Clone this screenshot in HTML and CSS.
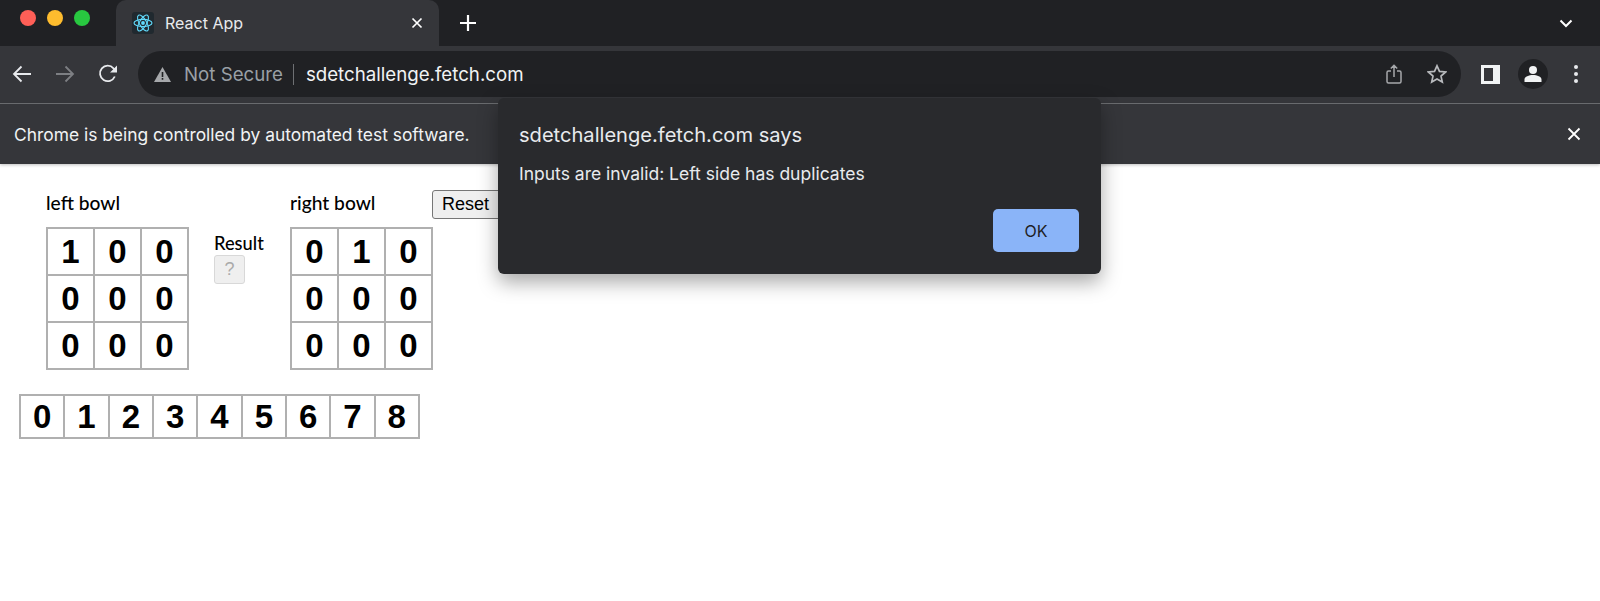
FILE: index.html
```html
<!DOCTYPE html>
<html lang="en">
<head>
  <meta charset="UTF-8">
  <meta name="viewport" content="width=device-width, initial-scale=1.0">
  <title>React App</title>
  <link rel="stylesheet" href="styles.css">
</head>
<body>
  <div class="tabstrip">
    <div class="traffic">
      <span class="light red"></span>
      <span class="light yellow"></span>
      <span class="light green"></span>
    </div>
    <div class="tab">
      <svg class="favicon" width="22" height="22" viewBox="0 0 22 22">
        <rect width="22" height="22" rx="3" fill="#20292f"/>
        <g fill="none" stroke="#61dafb" stroke-width="1.1">
          <ellipse cx="11" cy="11" rx="9" ry="3.6"/>
          <ellipse cx="11" cy="11" rx="9" ry="3.6" transform="rotate(60 11 11)"/>
          <ellipse cx="11" cy="11" rx="9" ry="3.6" transform="rotate(120 11 11)"/>
        </g>
        <circle cx="11" cy="11" r="1.9" fill="#61dafb"/>
      </svg>
      <span class="tab-title">React App</span>
      <svg class="tab-close" width="12" height="12" viewBox="0 0 12 12">
        <path d="M1.5 1.5l9 9M10.5 1.5l-9 9" stroke="#fff" stroke-width="1.7" fill="none"/>
      </svg>
    </div>
    <svg class="new-tab" width="18" height="18" viewBox="0 0 18 18">
      <path d="M9 1v16M1 9h16" stroke="#fff" stroke-width="2.2" fill="none"/>
    </svg>
    <svg class="tab-search" width="14" height="9" viewBox="0 0 14 9">
      <path d="M1.5 1.5L7 7l5.500-5.500" stroke="#fff" stroke-width="2" fill="none"/>
    </svg>
  </div>

  <div class="toolbar">
    <div class="nav">
      <svg width="20" height="18" viewBox="0 0 20 18">
        <path d="M19 9H2M9.500 1.500L2 9l7.500 7.500" stroke="#e8eaed" stroke-width="1.8" fill="none"/>
      </svg>
      <svg width="20" height="18" viewBox="0 0 20 18">
        <path d="M1 9h17M10.500 1.500L18 9l-7.500 7.500" stroke="#7d7f83" stroke-width="1.8" fill="none"/>
      </svg>
      <svg width="20" height="20" viewBox="0 0 20 20">
        <path d="M16.800 12.500A7.700 7.700 0 1 1 15.500 4.300L18 6.800" stroke="#e8eaed" stroke-width="1.8" fill="none"/>
        <path d="M19 1.500V8.500H12z" fill="#e8eaed"/>
      </svg>
    </div>
    <div class="omnibox">
      <svg class="warn" width="17" height="15" viewBox="0 0 17 15">
        <path d="M8.500 0L17 15H0z" fill="#a6a8ab"/>
        <path d="M7.700 5h1.600v5H7.700zM7.700 11h1.600v1.700H7.700z" fill="#202124"/>
      </svg>
      <span class="not-secure">Not Secure</span>
      <span class="divider"></span>
      <span class="url">sdetchallenge.fetch.com</span>
      <svg class="share" width="16" height="21" viewBox="0 0 16 21">
        <path d="M5 7H2.500A1.500 1.500 0 0 0 1 8.500v9A1.500 1.500 0 0 0 2.500 19h11a1.500 1.500 0 0 0 1.500-1.500v-9A1.500 1.500 0 0 0 13.500 7H11M8 13V1.500M4.800 4.500L8 1.300l3.200 3.200" stroke="#a6a8ab" stroke-width="1.500" fill="none"/>
      </svg>
      <svg class="star" width="20" height="20" viewBox="0 0 20 20">
        <path d="M10 1.800l2.500 5.600 6.100.6-4.600 4.100 1.300 6-5.300-3.100-5.300 3.100 1.300-6L1.400 8l6.100-.6z" stroke="#b8babd" stroke-width="1.700" fill="none"/>
      </svg>
    </div>
    <div class="actions">
      <svg width="19" height="19" viewBox="0 0 19 19">
        <path fill-rule="evenodd" d="M0 0h19v19H0zM3 3v13h9V3z" fill="#f1f3f4"/>
      </svg>
      <div class="avatar">
        <svg width="18" height="18" viewBox="0 0 18 18">
          <circle cx="9" cy="5" r="4" fill="#f1f3f4"/>
          <path d="M0.500 17v-2.500C0.500 11.500 5 10 9 10s8.500 1.500 8.500 4.500V17z" fill="#f1f3f4"/>
        </svg>
      </div>
      <div class="menu"><span></span><span></span><span></span></div>
    </div>
  </div>

  <div class="infobar">
    <span>Chrome is being controlled by automated test software.</span>
    <svg width="14" height="14" viewBox="0 0 14 14">
      <path d="M1.500 1.500l11 11M12.500 1.500l-11 11" stroke="#fff" stroke-width="1.800" fill="none"/>
    </svg>
  </div>

  <main class="page">
    <div class="game">
      <div class="bowl">
        <div class="bowl-label">left bowl</div>
        <div class="board">
          <div class="cell">1</div><div class="cell">0</div><div class="cell">0</div>
          <div class="cell">0</div><div class="cell">0</div><div class="cell">0</div>
          <div class="cell">0</div><div class="cell">0</div><div class="cell">0</div>
        </div>
      </div>
      <div class="result">
        <div class="result-label">Result</div>
        <button class="result-btn" disabled>?</button>
      </div>
      <div class="bowl">
        <div class="bowl-label">right bowl</div>
        <div class="board">
          <div class="cell">0</div><div class="cell">1</div><div class="cell">0</div>
          <div class="cell">0</div><div class="cell">0</div><div class="cell">0</div>
          <div class="cell">0</div><div class="cell">0</div><div class="cell">0</div>
        </div>
      </div>
      <button class="reset">Reset</button>
    </div>
    <div class="coins">
      <div class="coin">0</div><div class="coin">1</div><div class="coin">2</div>
      <div class="coin">3</div><div class="coin">4</div><div class="coin">5</div>
      <div class="coin">6</div><div class="coin">7</div><div class="coin">8</div>
    </div>
  </main>

  <div class="dialog">
    <div class="dialog-title">sdetchallenge.fetch.com says</div>
    <div class="dialog-msg">Inputs are invalid: Left side has duplicates</div>
    <div class="dialog-actions">
      <button class="ok">OK</button>
    </div>
  </div>
</body>
</html>
```

FILE: styles.css
```css
* {
  box-sizing: border-box;
}
html, body {
  height: 100%;
}
body {
  margin: 0;
  font-family: Inter, Roboto, sans-serif;
  background-color: #fff;
  overflow: hidden;
  position: relative;
}

/* browser chrome */
.tabstrip {
  height: 46px;
  background-color: #202124;
  display: flex;
  align-items: center;
}
.traffic {
  display: flex;
  gap: 11px;
  padding: 0 22px 10px 20px;
}
.light {
  width: 16px;
  height: 16px;
  border-radius: 50%;
}
.red { background-color: #ff5f57; }
.yellow { background-color: #febc2e; }
.green { background-color: #28c840; }
.tab {
  width: 323px;
  height: 46px;
  margin-left: 4px;
  padding: 0 16px;
  background-color: #35363a;
  border-radius: 10px 10px 0 0;
  display: flex;
  align-items: center;
  color: #e8eaed;
  font-size: 16px;
}
.favicon {
  flex: none;
}
.tab-title {
  margin-left: 11px;
  flex: 1;
}
.new-tab {
  margin-left: 20px;
}
.tab-search {
  margin-left: auto;
  margin-right: 27px;
}
.toolbar {
  height: 58px;
  background-color: #35363a;
  border-bottom: 1px solid #6e7073;
  display: flex;
  align-items: center;
  padding-bottom: 1px;
}
.nav {
  width: 138px;
  flex: none;
  padding: 0 20px 0 12px;
  display: flex;
  align-items: center;
  justify-content: space-between;
}
.omnibox {
  width: 1323px;
  height: 46px;
  background-color: #202124;
  border-radius: 23px;
  display: flex;
  align-items: center;
  padding: 0 14px 0 16px;
  font-size: 18.700px;
}
.not-secure {
  margin-left: 13px;
  color: #9aa0a6;
}
.divider {
  width: 1px;
  height: 21px;
  background-color: #6e7073;
  margin: 0 12px 0 10px;
}
.url {
  color: #f1f3f4;
  flex: 1;
}
.star {
  margin-left: 25px;
}
.actions {
  flex: 1;
  display: flex;
  align-items: center;
  padding-left: 20px;
}
.avatar {
  width: 30px;
  height: 30px;
  border-radius: 50%;
  background-color: #202124;
  margin-left: 18px;
  display: flex;
  align-items: center;
  justify-content: center;
}
.menu {
  margin-left: 26px;
  display: flex;
  flex-direction: column;
  gap: 3px;
}
.menu span {
  width: 4px;
  height: 4px;
  border-radius: 50%;
  background-color: #e8eaed;
}
.infobar {
  height: 60px;
  background-color: #35363a;
  display: flex;
  align-items: center;
  justify-content: space-between;
  padding: 0 19px 0 14px;
  color: #f1f3f4;
  font-size: 17.400px;
  box-shadow: 0 1px 3px rgba(0, 0, 0, 0.25);
  position: relative;
}

/* page content */
.page {
  padding: 25px 0 0 19px;
  color: #000;
}
.game {
  display: flex;
  align-items: flex-start;
  padding-left: 27px;
}
.bowl-label {
  font-family: Lato, sans-serif;
  font-size: 19.200px;
  font-weight: 500;
  line-height: 24px;
  padding-top: 2px;
  margin-bottom: 12px;
}
.board {
  width: 143px;
  display: grid;
  grid-template-columns: repeat(3, 1fr);
  border-top: 2px solid #b0b0b0;
  border-left: 2px solid #b0b0b0;
}
.cell {
  height: 47px;
  border-right: 2px solid #b0b0b0;
  border-bottom: 2px solid #b0b0b0;
  display: flex;
  align-items: center;
  justify-content: center;
  font-family: "Liberation Sans", Arial, sans-serif;
  font-size: 33px;
  font-weight: bold;
}
.result {
  width: 76px;
  margin: 42px 0 0 25px;
}
.result-label {
  font-family: Lato, sans-serif;
  font-size: 18.300px;
  font-weight: 500;
  line-height: 24px;
}
.result-btn {
  width: 31px;
  height: 29px;
  padding: 0;
  background-color: #efefef;
  border: 1px solid #d8d8d8;
  border-radius: 3px;
  color: #aaa;
  font-family: "Liberation Sans", Arial, sans-serif;
  font-size: 18px;
}
.reset {
  width: 90px;
  height: 29px;
  margin: 1px 0 0 -1px;
  padding: 0 0 0 9px;
  text-align: left;
  background-color: #efefef;
  border: 1px solid #767676;
  border-radius: 3px;
  color: #000;
  font-family: "Liberation Sans", Arial, sans-serif;
  font-size: 18px;
}
.coins {
  display: flex;
  width: 401px;
  margin-top: 24px;
  border-top: 2px solid #b0b0b0;
  border-left: 2px solid #b0b0b0;
}
.coin {
  flex: 1;
  height: 43px;
  border-right: 2px solid #b0b0b0;
  border-bottom: 2px solid #b0b0b0;
  display: flex;
  align-items: center;
  justify-content: center;
  font-family: "Liberation Sans", Arial, sans-serif;
  font-size: 33px;
  font-weight: bold;
}

/* js alert */
.dialog {
  position: absolute;
  left: 498px;
  top: 98px;
  width: 603px;
  height: 176px;
  padding: 23px 22px 22px 21px;
  background-color: #292a2d;
  border-radius: 6px;
  box-shadow: 0 8px 20px rgba(0, 0, 0, 0.35);
  color: #e8eaed;
  display: flex;
  flex-direction: column;
}
.dialog-title {
  font-size: 20.100px;
  line-height: 28px;
}
.dialog-msg {
  margin-top: 13px;
  font-size: 17.500px;
  line-height: 24px;
}
.dialog-actions {
  margin-top: auto;
  display: flex;
  justify-content: flex-end;
}
.ok {
  width: 86px;
  height: 43px;
  background-color: #8ab4f8;
  border: none;
  border-radius: 5px;
  color: #202124;
  font-family: Inter, Roboto, sans-serif;
  font-size: 16px;
}
```
